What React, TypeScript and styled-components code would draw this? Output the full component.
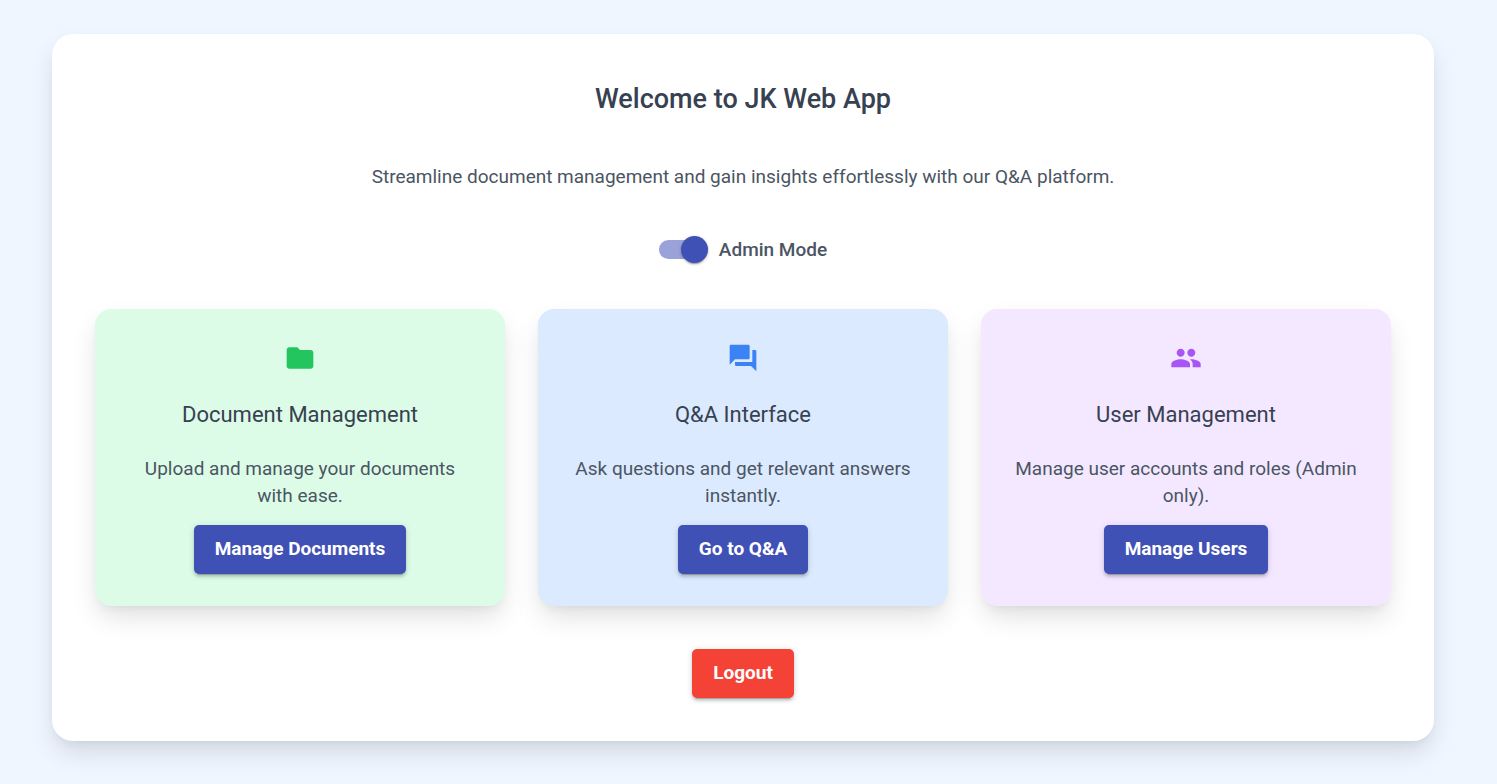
import React, { useState } from "react";
import styled, { createGlobalStyle } from "styled-components";
import { MdFolder, MdQuestionAnswer, MdPeople } from "react-icons/md";

const GlobalStyle = createGlobalStyle`
  * { box-sizing: border-box; }
  body {
    margin: 0;
    background: #eff6ff;
    color: #374151;
    font-family: Roboto, "Liberation Sans", sans-serif;
  }
`;

const Page = styled.div`
  min-height: 100vh;
  padding: 34px 63px 43px 52px;
`;

const Panel = styled.main`
  display: flex;
  flex-direction: column;
  align-items: center;
  padding: 43px;
  background: #ffffff;
  border-radius: 21px;
  box-shadow: 0 13px 27px -3px rgba(0, 0, 0, 0.13), 0 5px 8px -3px rgba(0, 0, 0, 0.05);
`;

const Title = styled.h1`
  margin: 0 0 41px;
  font-size: 27px;
  line-height: 45px;
  font-weight: 500;
`;

const Lead = styled.p`
  margin: 0 0 43px;
  font-size: 19px;
  line-height: 28px;
  color: #4b5563;
`;

const SwitchLabel = styled.label`
  display: flex;
  align-items: center;
  gap: 11px;
  margin-bottom: 44px;
  font-size: 19px;
  line-height: 31px;
  font-weight: 500;
  color: #4b5563;
  cursor: pointer;
`;

const Switch = styled.input`
  appearance: none;
  display: flex;
  align-items: center;
  width: 49px;
  height: 19px;
  margin: 0;
  border-radius: 10px;
  background: #9aa2d9;
  cursor: pointer;

  &::before {
    content: "";
    width: 27px;
    height: 27px;
    flex: none;
    border-radius: 50%;
    background: #fafafa;
    box-shadow: 0 3px 1px -2px rgba(0, 0, 0, 0.2), 0 1px 3px rgba(0, 0, 0, 0.3);
  }
  &:checked { justify-content: flex-end; }
  &:checked::before { background: #3f51b5; }
`;

const Cards = styled.section`
  display: grid;
  grid-template-columns: repeat(3, 1fr);
  gap: 33px;
  width: 100%;
  margin-bottom: 43px;
`;

const Card = styled.article<{ $bg: string }>`
  display: flex;
  flex-direction: column;
  align-items: center;
  padding: 33px 32px 32px;
  text-align: center;
  background: ${(p) => p.$bg};
  border-radius: 16px;
  box-shadow: 0 13px 27px -3px rgba(0, 0, 0, 0.13), 0 5px 8px -3px rgba(0, 0, 0, 0.05);
`;

const CardIcon = styled.div<{ $color: string }>`
  display: flex;
  margin-bottom: 22px;
  font-size: 32px;
  color: ${(p) => p.$color};
`;

const CardTitle = styled.h2`
  margin: 0 0 21px;
  font-size: 22px;
  line-height: 38px;
  font-weight: 400;
`;

const CardText = styled.p`
  margin: 0 0 16px;
  font-size: 19px;
  line-height: 27px;
  color: #4b5563;
`;

const Button = styled.button<{ $bg: string }>`
  padding: 0 21px 2px;
  border: 0;
  border-radius: 5px;
  background: ${(p) => p.$bg};
  color: #ffffff;
  font-family: inherit;
  font-size: 19px;
  line-height: 47px;
  font-weight: 700;
  box-shadow: 0 4px 1px -3px rgba(0, 0, 0, 0.2), 0 3px 3px rgba(0, 0, 0, 0.14), 0 1px 7px rgba(0, 0, 0, 0.12);
  cursor: pointer;
`;

const features = [
  { title: "Document Management", text: "Upload and manage your documents with ease.", action: "Manage Documents", bg: "#dcfce7", color: "#22c55e", Icon: MdFolder },
  { title: "Q&A Interface", text: "Ask questions and get relevant answers instantly.", action: "Go to Q&A", bg: "#dbeafe", color: "#3b82f6", Icon: MdQuestionAnswer },
  { title: "User Management", text: "Manage user accounts and roles (Admin only).", action: "Manage Users", bg: "#f3e8ff", color: "#a855f7", Icon: MdPeople },
];

export default function App() {
  const [admin, setAdmin] = useState(true);
  return (
    <Page>
      <GlobalStyle />
      <Panel>
        <Title>Welcome to JK Web App</Title>
        <Lead>Streamline document management and gain insights effortlessly with our Q&amp;A platform.</Lead>
        <SwitchLabel>
          <Switch type="checkbox" role="switch" checked={admin} onChange={(e) => setAdmin(e.target.checked)} />
          Admin Mode
        </SwitchLabel>
        <Cards>
          {features.map(({ title, text, action, bg, color, Icon }) => (
            <Card key={title} $bg={bg}>
              <CardIcon $color={color}><Icon aria-hidden /></CardIcon>
              <CardTitle>{title}</CardTitle>
              <CardText>{text}</CardText>
              <Button type="button" $bg="#3f51b5">{action}</Button>
            </Card>
          ))}
        </Cards>
        <Button type="button" $bg="#f44336">Logout</Button>
      </Panel>
    </Page>
  );
}
